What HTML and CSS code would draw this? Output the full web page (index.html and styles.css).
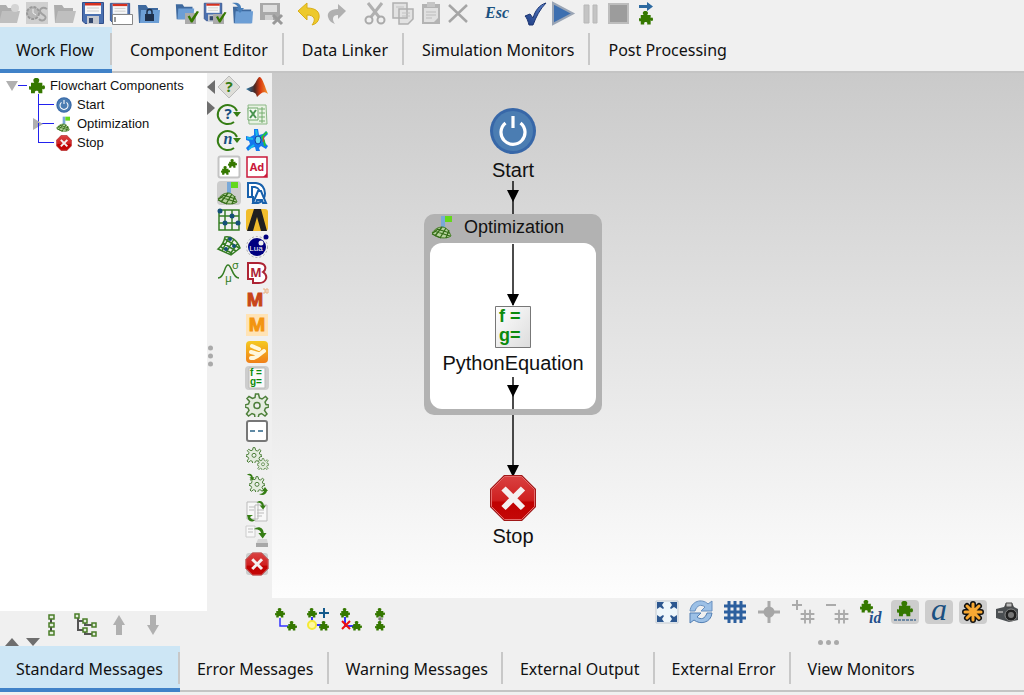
FILE: index.html
```html
<!DOCTYPE html>
<html lang="en">
<head>
  <meta charset="UTF-8">
  <meta name="viewport" content="width=device-width, initial-scale=1.0">
  <title>Work Flow</title>
  <link rel="stylesheet" href="styles.css">
</head>
<body>
  <!-- shared icons -->
  <svg class="defs" aria-hidden="true">
    <defs>
      <linearGradient id="gRed" x1="0" y1="0" x2="0" y2="1"><stop offset="0" stop-color="#d94040"/><stop offset=".55" stop-color="#cf2020"/><stop offset=".6" stop-color="#c00000"/><stop offset="1" stop-color="#c40808"/></linearGradient>
      <linearGradient id="gCheck" x1="0" y1="1" x2="1" y2="0"><stop offset="0" stop-color="#1c3a80"/><stop offset="1" stop-color="#5b83cc"/></linearGradient>
      <linearGradient id="gOrange" x1="0" y1="0" x2="0" y2="1"><stop offset="0" stop-color="#f5c922"/><stop offset="1" stop-color="#f07f18"/></linearGradient>
      <linearGradient id="gFlame" x1="0" y1="0" x2="1" y2="0"><stop offset="0" stop-color="#2d7fb0"/><stop offset=".4" stop-color="#4a2620"/><stop offset=".65" stop-color="#d83a10"/><stop offset="1" stop-color="#f59a30"/></linearGradient>
      <linearGradient id="gPaper" x1="0" y1="0" x2="1" y2="1"><stop offset="0" stop-color="#ffffff"/><stop offset="1" stop-color="#dcdcdc"/></linearGradient>
    </defs>
    <symbol id="puzzle" viewBox="0 0 24 24">
      <path fill="#357800" d="M8 7C5 3 7 0 11 0S17 3 14 7H20V12C22 10 24 11 24 14S22 18 20 16V23H14C15 19.500 13 19 11.500 19S8 19.500 9 23H3V17C1 19 0 17 0 14.500S1 11 3 13V7Z"/>
    </symbol>
    <symbol id="power" viewBox="0 0 48 48">
      <circle cx="24" cy="24" r="23" fill="#3767a8"/><circle cx="24" cy="24" r="20" fill="#4b7db2"/>
      <path d="M16.500 16a12 12 0 1 0 15 0M24 9V21" fill="none" stroke="#fff" stroke-width="3.200"/>
    </symbol>
    <symbol id="stop" viewBox="0 0 48 48">
      <path d="M15 1H33L47 15V33L33 47H15L1 33V15Z" fill="#a01818"/>
      <path d="M15.500 2.500H32.500L45.500 15.500V32.500L32.500 45.500H15.500L2.500 32.500V15.500Z" fill="url(#gRed)" stroke="#e46a6a"/>
      <path d="M14.500 14.500L34 34M34 14.500L14.500 34" stroke="#f4f0f0" stroke-width="6" fill="none"/>
    </symbol>
    <symbol id="hill" viewBox="0 0 24 24">
      <path d="M10 1h4v13h-4z" fill="#7aa9d8"/><path d="M14 1h7v6h-7z" fill="#64d81c"/>
      <path d="M1 18C4 14 7 12 12 12C16 13 18 16 20 21C16 24 6 24 1 18Z" fill="#b5d29c" stroke="#3f7a1f"/>
      <path d="M3 16l16 5M6 14l13 4M1 19l9 4M4 21L11 12M9 23l6-10M15 23l3-8M2 18l5-4" stroke="#356d18" stroke-width="1.300" fill="none"/>
    </symbol>
    <symbol id="floppy" viewBox="0 0 24 24">
      <path d="M1.500 1.500h21v21H4L1.500 20Z" fill="#4a70b0" stroke="#33508c"/>
      <path d="M4 2h16v11H4z" fill="#f7f7f7"/><path d="M4 2h16v2.500H4z" fill="#d6301f"/>
      <path d="M6 7h12M6 10h12" stroke="#ccc"/>
      <path d="M6 15h12v8H6z" fill="#c4c8cf"/><path d="M8 17h4v5H8z" fill="#34486d"/>
    </symbol>
    <symbol id="folder" viewBox="0 0 24 24">
      <path d="M1 4h8l2 3h10v15H2Z" fill="#3e699e"/><path d="M4 9h19l-1 13H3Z" fill="#6c9ed5"/>
    </symbol>
    <symbol id="folder-gray" viewBox="0 0 24 24">
      <path d="M1 4h8l2 3h9v15H2Z" fill="#adadad"/><path d="M5 10h18l-3 12H2Z" fill="#bfbfbf"/>
    </symbol>
    <symbol id="tick" viewBox="0 0 24 24">
      <path d="M3 12l4-2 3 6L20 2l4 1L12 23H9Z" fill="#357800"/>
    </symbol>
    <symbol id="gear" viewBox="0 0 24 24">
      <path d="M10.500 1h3l1 4 2.500 1 3.500-2.500 2 2-2.500 3.500 1 2.500 3 .500v2l-3.500 1-1 2.500 2.500 3.500-2 2-3.500-2.500-2.500 1-1 3.500h-3l-.500-3.500-2.500-1-3.500 2.500-2-2 2.500-3.500-1-2.500-3-1v-2l3.500-1 1-2.500-2.500-3 2-2 3.500 2 2.500-1Z" fill="#e4ecdf" stroke="#4d7f3a" stroke-width="1.500"/>
      <circle cx="12" cy="12.500" r="3" fill="#f0f0f0" stroke="#4d7f3a" stroke-width="1.500"/>
    </symbol>
    <symbol id="bend" viewBox="0 0 24 24">
      <path d="M1 6C8 -1 18 2 19 13h5l-7 10-8-10h5C13 8 8 5 1 6Z" fill="#357d14"/>
    </symbol>
    <symbol id="hash" viewBox="0 0 24 24">
      <path d="M8 1v22M16 1v22M1 8h22M1 16h22" fill="none" stroke="currentColor" stroke-width="3"/>
    </symbol>
  </svg>

  <header class="toolbar">
    <div class="tool-group">
      <button class="tool" aria-label="New"><svg viewBox="0 0 24 24"><use href="#folder-gray"/><circle cx="18" cy="7" r="4" fill="#d4d4d4"/></svg></button>
      <button class="tool" aria-label="Recent"><svg viewBox="0 0 24 24"><path d="M1 1h22v22H1z" fill="#cfcfcf"/><circle cx="8" cy="12" r="6" fill="#b8b8b8" stroke="#999" stroke-width="2" stroke-dasharray="3 1"/><path d="M8 8v4l3 2" fill="none" stroke="#eee"/><path d="M22 8c-5-3-9 1-6 4s6 3 4 6-5 1-6 0" fill="none" stroke="#a0a0a0" stroke-width="2"/></svg></button>
      <button class="tool" aria-label="Open"><svg viewBox="0 0 24 24"><use href="#folder-gray"/></svg></button>
      <button class="tool" aria-label="Save"><svg viewBox="0 0 24 24"><use href="#floppy"/></svg></button>
      <button class="tool" aria-label="Save as"><svg viewBox="0 0 24 24"><use href="#floppy" width="22" height="24"/><path d="M3.500 13.500h20v10h-20z" fill="#fff" stroke="#888"/><path d="M6 16v5" stroke="#333"/></svg></button>
      <button class="tool" aria-label="Lock project"><svg viewBox="0 0 24 24"><use href="#folder"/><path d="M8 13h9v7H8z" fill="#1d2f4b"/><path d="M10 13v-2a2.500 2.500 0 0 1 5 0v2" fill="none" stroke="#1d2f4b" stroke-width="1.500"/></svg></button>
    </div>
    <div class="tool-group">
      <button class="tool" aria-label="Check folder"><svg viewBox="0 0 24 24"><use href="#folder" width="20" height="20"/><path d="M10 12h11v11H10z" fill="#ababab"/><use href="#tick" x="11" y="9" width="13" height="13"/></svg></button>
      <button class="tool" aria-label="Check save"><svg viewBox="0 0 24 24"><use href="#floppy" width="20" height="22"/><path d="M10 13h11v10H10z" fill="#ababab"/><use href="#tick" x="11" y="10" width="13" height="12"/></svg></button>
      <button class="tool" aria-label="Import"><svg viewBox="0 0 24 24"><use href="#folder" x="1" y="2" width="22" height="22"/><path d="M1 2C7 1 10 3 10 7h3l-4 5-4-5h2C7 5 5 3 1 2Z" fill="#477eb9"/></svg></button>
      <button class="tool" aria-label="Save run"><svg viewBox="0 0 24 24"><path d="M1 2h20v17H1z" fill="#a8a8a8"/><path d="M4 4h14v7H4z" fill="#dedede"/><path d="M6 14h8v5H6z" fill="#d0d0d0"/><path d="M14 14l9 9M23 14l-9 9" stroke="#999" stroke-width="3"/></svg></button>
    </div>
    <div class="tool-group">
      <button class="tool" aria-label="Undo"><svg viewBox="0 0 24 24"><path d="M1 10L10 2V7C19 7 23 11 22 17C21 21 19 23 15 24C19 19 18 14 10 14V19Z" fill="#edc92c" stroke="#d9ae18"/></svg></button>
      <button class="tool" aria-label="Redo"><svg viewBox="0 0 24 24"><path d="M21 10L13 3V8C5 8 2 12 3 16C4 20 7 22 10 23C7 19 7 14 13 14V18Z" fill="#b0b0b0"/></svg></button>
    </div>
    <div class="tool-group">
      <button class="tool" aria-label="Cut"><svg viewBox="0 0 24 24"><path d="M5 2l11 14M19 2L8 16" stroke="#b0b0b0" stroke-width="3"/><circle cx="6" cy="19" r="3.500" fill="none" stroke="#aaa" stroke-width="2"/><circle cx="18" cy="19" r="3.500" fill="none" stroke="#aaa" stroke-width="2"/></svg></button>
      <button class="tool" aria-label="Copy"><svg viewBox="0 0 24 24"><path d="M2 2h14v15H2zM8 8h14v10l-5 5H8z" fill="#e2e2e2" stroke="#b0b0b0" stroke-width="1.500"/><path d="M5 6h8M11 12h8M11 15h8" stroke="#c2c2c2"/></svg></button>
      <button class="tool" aria-label="Paste"><svg viewBox="0 0 24 24"><path d="M3 3h18v20H3z" fill="#b3b3b3"/><path d="M5 7h14v10l-4 4H5z" fill="#e0e0e0"/><path d="M8 1h8v5H8z" fill="#c5c5c5"/><path d="M7 11h10M7 14h10M7 17h6" stroke="#bcbcbc"/></svg></button>
      <button class="tool" aria-label="Delete"><svg viewBox="0 0 24 24"><path d="M2 4l18 17M20 4L2 21" stroke="#a5a5a5" stroke-width="2.500"/></svg></button>
    </div>
    <div class="tool-group">
      <button class="tool esc">Esc</button>
    </div>
    <div class="tool-group">
      <button class="tool" aria-label="Validate"><svg viewBox="0 0 24 24"><path d="M2 15l5-2 3 4C12 10 16 4 23 2C17 8 13 16 10 24H6C5 20 4 17 2 15Z" fill="url(#gCheck)" stroke="#1c3571"/></svg></button>
      <button class="tool" aria-label="Run"><svg viewBox="0 0 24 24"><path d="M2 2L22 12.500L2 23Z" fill="#3d6fb0" stroke="#9aa5b5" stroke-width="2"/></svg></button>
      <button class="tool" aria-label="Pause"><svg viewBox="0 0 24 24"><path d="M5 4h5v18H5zM14 4h4v18h-4z" fill="#c4c4c4" stroke="#b8b8b8"/></svg></button>
      <button class="tool" aria-label="Stop"><svg viewBox="0 0 24 24"><path d="M2 3h19v19H2z" fill="#9c9c9c" stroke="#bdbdbd" stroke-width="2"/></svg></button>
      <button class="tool" aria-label="Run component"><svg viewBox="0 0 24 24"><path d="M4 4h8V1l6 4.500-6 4.500V7H4Z" fill="#2c69a0"/><use href="#puzzle" x="4" y="10" width="14" height="14"/></svg></button>
    </div>
  </header>

  <nav class="tabs">
    <button class="tab active">Work Flow</button>
    <button class="tab">Component Editor</button>
    <button class="tab">Data Linker</button>
    <button class="tab">Simulation Monitors</button>
    <button class="tab">Post Processing</button>
  </nav>

  <main class="workspace">
    <aside class="sidebar">
      <div class="tree">
        <div class="tree-row root">
          <button class="toggle" aria-label="Collapse"><svg viewBox="0 0 12 12"><path d="M0 1h12L6 11Z"/></svg></button>
          <span class="dash"></span>
          <svg class="tree-icon"><use href="#puzzle"/></svg>
          <span>Flowchart Components</span>
        </div>
        <ul>
          <li class="tree-row"><svg class="tree-icon"><use href="#power"/></svg><span>Start</span></li>
          <li class="tree-row"><button class="toggle branch" aria-label="Expand"><svg viewBox="0 0 12 12"><path d="M1 0v12L11 6Z"/></svg></button><svg class="tree-icon"><use href="#hill"/></svg><span>Optimization</span></li>
          <li class="tree-row"><svg class="tree-icon"><use href="#stop"/></svg><span>Stop</span></li>
        </ul>
      </div>
      <div class="tree-tools">
        <button class="tool" aria-label="Flat list"><svg viewBox="0 0 24 24"><path d="M12 2v20" stroke="#444" stroke-width="2"/><path d="M10 2h5v4h-5zM10 10h5v4h-5zM10 18h5v4h-5z" fill="#e5eedf" stroke="#4a7d28" stroke-width="1.500"/></svg></button>
        <button class="tool" aria-label="Tree list"><svg viewBox="0 0 24 24"><path d="M5 3v14h8M5 8h8M12 8v4h8M12 17v4h8" fill="none" stroke="#555" stroke-width="2"/><path d="M2 1h4v4H2zM10 6h4v4h-4zM10 15h4v4h-4zM19 10h4v4h-4zM19 19h4v4h-4z" fill="#e5eedf" stroke="#4a7d28" stroke-width="1.500"/></svg></button>
        <button class="tool" aria-label="Move up"><svg viewBox="0 0 24 24"><path d="M12 2l6 10h-3v10H9V12H6Z" fill="#b0b0b0"/></svg></button>
        <button class="tool" aria-label="Move down"><svg viewBox="0 0 24 24"><path d="M12 22l6-10h-3V2H9v10H6Z" fill="#b0b0b0"/></svg></button>
      </div>
    </aside>

    <div class="sash">
      <button class="sash-arrow" aria-label="Hide tree"><svg viewBox="0 0 8 14"><path d="M8 0v14L0 7Z"/></svg></button>
      <button class="sash-arrow" aria-label="Show tree"><svg viewBox="0 0 8 14"><path d="M0 0v14L8 7Z"/></svg></button>
      <span class="dots"><i></i><i></i><i></i></span>
    </div>

    <div class="palette">
      <div class="palette-col">
        <button class="tool" aria-label="Condition"><svg viewBox="0 0 24 24"><path d="M12 1L23 12L12 23L1 12Z" fill="#deded8" stroke="#bbb"/><text x="12" y="17" class="q green">?</text></svg></button>
        <button class="tool" aria-label="Loop condition"><svg viewBox="0 0 24 24"><path d="M17 20A10 9.500 0 1 1 20 9" fill="none" stroke="#357d14" stroke-width="2"/><path d="M16 10h8l-4 5Z" fill="#357d14"/><text x="11" y="17" class="q blue">?</text></svg></button>
        <button class="tool" aria-label="Loop count"><svg viewBox="0 0 24 24"><path d="M17 20A10 9.500 0 1 1 20 9" fill="none" stroke="#357d14" stroke-width="2"/><path d="M16 10h8l-4 5Z" fill="#357d14"/><text x="11" y="16" class="n blue">n</text></svg></button>
        <button class="tool" aria-label="Group"><svg viewBox="0 0 24 24"><rect x="1.500" y="1.500" width="21" height="21" rx="2" fill="#fff" stroke="#c4c4c4" stroke-width="2"/><use href="#puzzle" x="4" y="11" width="9" height="9"/><use href="#puzzle" x="11" y="4" width="9" height="9"/></svg></button>
        <button class="tool pressed" aria-label="Optimization"><svg viewBox="0 0 24 24"><use href="#hill"/></svg></button>
        <button class="tool" aria-label="Parameter study"><svg viewBox="0 0 24 24"><path d="M2 2h20v20H2zM8 2v20M15 2v20M2 8h20M2 15h20" fill="none" stroke="#357d24" stroke-width="1.500"/><g fill="#155078"><circle cx="3" cy="3" r="2.500"/><circle cx="15" cy="8" r="2.500"/><circle cx="8" cy="15" r="2.500"/><circle cx="21" cy="15" r="2.500"/></g></svg></button>
        <button class="tool" aria-label="Response surface"><svg viewBox="0 0 24 24"><path d="M8 3C14 2 20 6 23 14L14 21L1 15C5 12 7 8 8 3ZM6 9l13 8M8 5l14 9M4 13l12 7M12 3L5 17M17 5L9 19M21 9l-8 11" fill="none" stroke="#357d24" stroke-width="1.500"/><circle cx="13" cy="5" r="2" fill="#155078"/><circle cx="9" cy="15" r="2" fill="#155078"/><circle cx="17" cy="12" r="2" fill="#155078"/></svg></button>
        <button class="tool" aria-label="Robustness"><svg viewBox="0 0 24 24"><path d="M1 17C8 17 7 4 11 4S15 17 22 17" fill="none" stroke="#357d24" stroke-width="1.500"/><text x="15" y="8" class="sym">σ</text><text x="8" y="21" class="sym">µ</text></svg></button>
      </div>
      <div class="palette-col">
        <button class="tool" aria-label="Matlab"><svg viewBox="0 0 24 24"><path d="M1 14L8 11C11 8 13 1 15 2C18 4 20 12 23 19C19 16 17 17 12 22C11 18 9 17 6 17Z" fill="url(#gFlame)"/></svg></button>
        <button class="tool" aria-label="Excel"><svg viewBox="0 0 24 24"><path d="M3 3h18l1 19H4Z" fill="#e8f2e3" stroke="#8cb886"/><path d="M14 7h6M14 11h6M14 15h6M14 19h6M17 5v16" stroke="#74ad6e"/><path d="M3 6h10v12H3z" fill="#f4faf2" stroke="#73a96c"/><path d="M5 8l6 8M11 8l-6 8" stroke="#4a9450" stroke-width="2"/></svg></button>
        <button class="tool" aria-label="Simulation"><svg viewBox="0 0 24 24"><path d="M9 1h4l1 6 4-1 3-3 2 3-4 4 1 5 3 3-2 3-5-3-2 2 1 3h-4l-1-4-4 1-3 3-2-3 4-4-1-3-3-1V8l4 1 4-2Z" fill="#1478ee"/><path d="M11 2l1 6M2 10l6 1M4 21l5-4" fill="none" stroke="#17bde6" stroke-width="2"/><ellipse cx="13" cy="12" rx="3" ry="4" fill="#68dbf4" stroke="#103fa0"/><path d="M22 4l-5 5 2 4 1 5" fill="none" stroke="#22c33f" stroke-width="2"/><path d="M19 8l-1 6" stroke="#e33"/></svg></button>
        <button class="tool" aria-label="Adams"><svg viewBox="0 0 24 24"><path d="M2 2h20v20H2z" fill="#fff" stroke="#c9183a" stroke-width="1.500"/><path d="M22 18v4h-4Z" fill="#c9183a"/><text x="12" y="16" class="ad">Ad</text></svg></button>
        <button class="tool" aria-label="Design analysis"><svg viewBox="0 0 24 24"><path d="M3 2h8c12 1 12 20 0 20H8v-6H3Z" fill="#fff" stroke="#1760ab" stroke-width="2"/><path d="M7 16V6h3c4 1 6 5 5 10" fill="none" stroke="#1760ab" stroke-width="2"/><path d="M8 22l5-12h3l5 12h-3l-1-3h-5l-1 3Z" fill="#fff" stroke="#1760ab" stroke-width="2"/></svg></button>
        <button class="tool" aria-label="Ansys"><svg viewBox="0 0 24 24"><rect x="1" y="1" width="22" height="22" rx="3" fill="#f1bd2c"/><path d="M9 1h7l6 22h-6L12 9 8 23H2Z" fill="#202020"/></svg></button>
        <button class="tool" aria-label="Lua"><svg viewBox="0 0 24 24"><circle cx="12" cy="13" r="10.500" fill="none" stroke="#aaa" stroke-dasharray="2 2"/><circle cx="12" cy="13" r="9" fill="#000080"/><circle cx="16" cy="9" r="2.500" fill="#f0f0f0"/><circle cx="21" cy="3" r="2.500" fill="#000080"/><text x="11" y="17" class="lua">Lua</text></svg></button>
        <button class="tool" aria-label="Madymo"><svg viewBox="0 0 24 24"><path d="M3 2h10c8 0 9 6 5 9c6 4 3 11-4 11H8v-4H3Z" fill="#fff" stroke="#ad2434" stroke-width="2"/><text x="11" y="16" class="m red">M</text></svg></button>
        <button class="tool" aria-label="Marc 3D"><svg viewBox="0 0 24 24"><text x="10" y="19" class="m big rust">M</text><path d="M18 2h2v4h-2M21 2h2v4h-2z" fill="none" stroke="#eab080"/></svg></button>
        <button class="tool" aria-label="Marc"><svg viewBox="0 0 24 24"><path d="M1 1h22v22H1z" fill="#ffe3b5"/><text x="12" y="18" class="m big orange">M</text></svg></button>
        <button class="tool" aria-label="Python"><svg viewBox="0 0 24 24"><rect x="1" y="1" width="22" height="22" rx="4" fill="url(#gOrange)"/><path d="M7 6l7 3M6 12l7 2M6 18c6 1 8-4 13-7" stroke="#fff7dc" stroke-width="4" fill="none" stroke-linecap="round"/></svg></button>
        <button class="tool pressed" aria-label="Equation"><svg viewBox="0 0 24 24"><path d="M4 2h16v20H4z" fill="#fafafa" stroke="#bbb"/><text x="5" y="10" class="eq small">f =</text><text x="5" y="19" class="eq small">g=</text></svg></button>
        <button class="tool" aria-label="Command"><svg viewBox="0 0 24 24"><use href="#gear"/></svg></button>
        <button class="tool" aria-label="Blank"><svg viewBox="0 0 24 24"><rect x="2" y="2" width="20" height="20" rx="2" fill="#fff" stroke="#777" stroke-width="2"/><path d="M5 12h5M13 12h5" stroke="#2d6488" stroke-width="1.500"/></svg></button>
        <button class="tool" aria-label="Batch"><svg viewBox="0 0 24 24"><use href="#gear" x="1" y="1" width="16" height="16"/><use href="#gear" x="12" y="12" width="12" height="12"/></svg></button>
        <button class="tool" aria-label="Remote command"><svg viewBox="0 0 24 24"><use href="#gear" x="4" y="4" width="16" height="16"/><use href="#bend" x="1" y="1" width="9" height="8"/><path d="M20 15l3 4h-1c-1 4-5 5-8 3 3 0 4-1 5-3h-2Z" fill="#357d14"/></svg></button>
        <button class="tool" aria-label="Copy files"><svg viewBox="0 0 24 24"><path d="M2 3h11v17H2zM10 6h12v16H10z" fill="#f8f8f8" stroke="#bbb"/><path d="M4 8h6M4 11h5M12 11h7M12 14h7M12 17h5" stroke="#bbb"/><use href="#bend" x="11" y="1" width="10" height="10"/><path d="M2 16h6l-3 2c1 2 3 3 5 3-3 3-6 1-7-1Z" fill="#357d14"/></svg></button>
        <button class="tool" aria-label="Save output"><svg viewBox="0 0 24 24"><path d="M1 1h9v11H1z" fill="#f8f8f8" stroke="#ccc"/><path d="M3 4h5M3 7h5" stroke="#bbb"/><use href="#bend" x="8" y="1" width="14" height="13"/><path d="M13 14h9l1 5H11Z" fill="#d4d4d4"/><path d="M11 18h12v4H11z" fill="#a7a7a7"/></svg></button>
        <button class="tool" aria-label="Stop"><svg viewBox="0 0 24 24"><rect x="1" y="1" width="22" height="22" rx="3" fill="#ccc"/><use href="#stop" width="24" height="24"/></svg></button>
      </div>
    </div>

    <section class="stage">
      <div class="canvas">
        <div class="group">
          <div class="group-title"><svg viewBox="0 0 24 24"><use href="#hill"/></svg><span>Optimization</span></div>
          <div class="group-body"></div>
        </div>
        <svg class="links" width="340" height="420">
          <path d="M241 108V141M241 171V232M241 304V336M241 342V402" stroke="#111" stroke-width="1.500"/>
          <path d="M235 117h12l-6 12ZM235 221h12l-6 12ZM235 312h12l-6 12ZM235 392h12l-6 12Z"/>
        </svg>
        <div class="node node-start"><svg width="48" height="48"><use href="#power"/></svg><span>Start</span></div>
        <div class="node node-equation">
          <svg width="38" height="42" viewBox="0 0 38 42"><path d="M1.500 .500h35v41h-35z" fill="url(#gPaper)" stroke="#777"/><text x="5" y="16" class="eq">f =</text><text x="5" y="35" class="eq">g=</text></svg>
          <span>PythonEquation</span>
        </div>
        <div class="node node-stop"><svg width="48" height="48"><use href="#stop"/></svg><span>Stop</span></div>
      </div>

      <div class="stage-tools">
        <div class="link-tools">
          <button class="tool" aria-label="Link"><svg viewBox="0 0 24 24"><use href="#puzzle" x="1" y="1" width="10" height="10"/><path d="M6 11v8h8" fill="none" stroke="#33f" stroke-width="1.500"/><use href="#puzzle" x="13" y="14" width="10" height="10"/></svg></button>
          <button class="tool" aria-label="Add link"><svg viewBox="0 0 24 24"><path d="M6 10v6M10 18h5" stroke="#33f" stroke-width="2"/><circle cx="6" cy="18" r="4" fill="#fff8a0" stroke="#f5e936" stroke-width="2"/><use href="#puzzle" x="1" y="1" width="10" height="10"/><use href="#puzzle" x="13" y="14" width="10" height="10"/><path d="M18 1v10M13 6h10" stroke="#155a8c" stroke-width="2"/></svg></button>
          <button class="tool" aria-label="Remove link"><svg viewBox="0 0 24 24"><path d="M7 10v9h9" stroke="#33f" fill="none" stroke-width="2"/><use href="#puzzle" x="2" y="1" width="10" height="10"/><use href="#puzzle" x="14" y="14" width="10" height="10"/><path d="M4 14l8 8M12 14l-8 8" stroke="#f01010" stroke-width="2"/></svg></button>
          <button class="tool" aria-label="Insert"><svg viewBox="0 0 24 24"><use href="#puzzle" x="5" y="1" width="10" height="10"/><path d="M10 9v6M8 12h5" stroke="#555"/><use href="#puzzle" x="5" y="14" width="10" height="10"/></svg></button>
        </div>
        <div class="view-tools">
          <button class="tool" aria-label="Fit"><svg viewBox="0 0 24 24"><path d="M1 1h22v22H1z" fill="#eef6fb" stroke="#c3c9d0"/><path d="M2 2h7L7 5l2 3-1 1-3-2-3 2ZM22 2h-7l2 3-2 3 1 1 3-2 3 2ZM2 22h7l-2-3 2-3-1-1-3 2-3-2ZM22 22h-7l2-3-2-3 1-1 3 2 3-2Z" fill="#2c5790"/></svg></button>
          <button class="tool" aria-label="Refresh"><svg viewBox="0 0 24 24"><path d="M1 11C2 1 13-2 19 4L23 1V11H12L16 7C12 4 8 5 6 11Z" fill="#9cc0e6" stroke="#6890c0"/><path d="M23 13C22 23 11 25 5 20L1 23V13H12L8 17C12 20 16 19 18 13Z" fill="#9cc0e6" stroke="#537fb3"/></svg></button>
          <button class="tool" aria-label="Grid"><svg class="blue-grid" viewBox="0 0 24 24"><path d="M6 1v22M12 1v22M18 1v22M1 6h22M1 12h22M1 18h22" stroke="currentColor" stroke-width="3"/></svg></button>
          <button class="tool" aria-label="Center"><svg viewBox="0 0 24 24"><path d="M12 1v22M1 12h22" stroke="#aaa" stroke-width="3"/><circle cx="12" cy="12" r="5.500" fill="#a6a6a6"/></svg></button>
          <button class="tool" aria-label="Finer grid"><svg class="gray-grid" viewBox="0 0 24 24"><path d="M6 0v10M1 5h10" stroke="currentColor" stroke-width="2"/><use href="#hash" x="9" y="9" width="15" height="15"/></svg></button>
          <button class="tool" aria-label="Coarser grid"><svg class="gray-grid" viewBox="0 0 24 24"><path d="M1 5h10" stroke="currentColor" stroke-width="2"/><use href="#hash" x="9" y="9" width="15" height="15"/></svg></button>
          <button class="tool" aria-label="Show id"><svg viewBox="0 0 24 24"><use href="#puzzle" x="1" y="0" width="13" height="13"/><text x="10" y="23" class="id">id</text></svg></button>
          <button class="tool pressed" aria-label="Show names"><svg viewBox="0 0 24 24"><use href="#puzzle" x="4" y="1" width="16" height="16"/><path d="M1 20h22" stroke="#4e7195" stroke-width="1.500" stroke-dasharray="3 1"/></svg></button>
          <button class="tool pressed" aria-label="Labels"><svg viewBox="0 0 24 24"><text x="12" y="20" class="script-a">a</text></svg></button>
          <button class="tool pressed" aria-label="Highlight"><svg viewBox="0 0 24 24"><path d="M12 4v16M4 12h16M6 6l12 12M18 6L6 18" stroke="#111" stroke-width="6" stroke-linecap="round"/><path d="M12 4v16M4 12h16M6 6l12 12M18 6L6 18" stroke="#f7a833" stroke-width="3" stroke-linecap="round"/></svg></button>
          <button class="tool" aria-label="Snapshot"><svg viewBox="0 0 24 24"><path d="M1 9l8-2 2-4h6l2 4 4 2v11l-9 2L1 18Z" fill="#4b4f52"/><path d="M11 3h6v4h-6z" fill="#bbb" stroke="#444"/><circle cx="16" cy="15" r="6" fill="#222" stroke="#888"/><circle cx="16" cy="15" r="3" fill="#777"/><path d="M3 11h5v2H3z" fill="#999"/></svg></button>
        </div>
      </div>
    </section>
  </main>

  <div class="sash-bottom">
    <button class="sash-arrow" aria-label="Show messages"><svg viewBox="0 0 14 8"><path d="M0 8h14L7 0Z"/></svg></button>
    <button class="sash-arrow" aria-label="Hide messages"><svg viewBox="0 0 14 8"><path d="M0 0h14L7 8Z"/></svg></button>
    <span class="dots"><i></i><i></i><i></i></span>
  </div>

  <nav class="tabs messages">
    <button class="tab active">Standard Messages</button>
    <button class="tab">Error Messages</button>
    <button class="tab">Warning Messages</button>
    <button class="tab">External Output</button>
    <button class="tab">External Error</button>
    <button class="tab">View Monitors</button>
  </nav>
</body>
</html>
```
FILE: styles.css
```css
* {
  box-sizing: border-box;
}
body {
  margin: 0;
  height: 100vh;
  display: flex;
  flex-direction: column;
  background-color: #f0f0f0;
  color: #111;
  font-family: "Liberation Sans", Arial, sans-serif;
  font-size: 13px;
  overflow: hidden;
}
button {
  padding: 0;
  border: none;
  background: none;
  color: inherit;
  cursor: pointer;
}
svg {
  display: block;
  flex: none;
}
.defs {
  position: absolute;
  width: 0;
  height: 0;
}

/* toolbar */
.toolbar {
  display: flex;
  flex: none;
  gap: 14px;
  height: 27px;
  padding-top: 1px;
  margin-left: -3px;
}
.tool-group {
  display: flex;
  gap: 4px;
}
.tool {
  width: 24px;
  height: 24px;
  display: flex;
  align-items: center;
  justify-content: center;
  flex: none;
  border-radius: 4px;
}
.tool svg {
  width: 24px;
  height: 24px;
}
.pressed {
  background-color: #cdcdcd;
}
.esc {
  font: italic bold 16px "Liberation Serif", serif;
  color: #1c5280;
}

/* tabs */
.tabs {
  display: flex;
  flex: none;
  height: 46px;
  border-bottom: 2px solid #c4c4c4;
}
.tab {
  position: relative;
  height: 46px;
  padding: 0 16px 0 18px;
  font: 16px "Noto Sans", "Open Sans", sans-serif;
}
.tab::after {
  content: "";
  position: absolute;
  top: 6px;
  right: 0;
  width: 2px;
  height: 32px;
  background-color: #c8c8c8;
}
.tab:last-child::after {
  display: none;
}
.tab.active {
  padding: 4px 18px 0 16px;
  background-color: #cde6f5;
  border-bottom: 4px solid #4082c8;
}
.messages {
  margin-bottom: 3px;
}
.messages .tab {
  padding: 0 15px 0 17px;
}
.messages .tab.active {
  padding: 4px 17px 0 16px;
}

/* main area */
.workspace {
  display: flex;
  flex: 1;
  min-height: 0;
}
.sidebar {
  display: flex;
  flex-direction: column;
  width: 207px;
  flex: none;
}
.tree {
  flex: 1;
  padding-top: 3px;
  background-color: #fff;
}
.tree ul {
  list-style: none;
  margin: 0 0 0 38px;
  padding: 0;
}
.tree-row {
  position: relative;
  display: flex;
  align-items: center;
  height: 19px;
  gap: 5px;
}
.tree-icon {
  width: 16px;
  height: 16px;
}
.root {
  padding-left: 6px;
  gap: 0;
  z-index: 1;
}
.root .tree-icon {
  margin-right: 5px;
}
.toggle svg {
  width: 12px;
  height: 12px;
  fill: #b0b0b0;
}
.dash {
  width: 9px;
  margin-right: 2px;
  border-top: 1px solid #22e;
}
.tree li {
  padding-left: 18px;
}
.tree li::before {
  content: "";
  position: absolute;
  left: 0;
  bottom: 9px;
  width: 15px;
  height: 19px;
  border-left: 1px solid #22e;
  border-bottom: 1px solid #22e;
}
.tree li:first-child::before {
  height: 10px;
}
.toggle.branch {
  position: absolute;
  left: -6px;
}
.tree-tools {
  display: flex;
  flex: none;
  gap: 10px;
  height: 27px;
  padding: 2px 0 0 39px;
}

/* splitters */
.sash {
  position: relative;
  display: flex;
  flex-direction: column;
  gap: 7px;
  width: 8px;
  flex: none;
  padding-top: 7px;
}
.sash-arrow svg {
  width: 8px;
  height: 14px;
  fill: #6e6e6e;
}
.dots {
  display: flex;
  gap: 3px;
}
.dots i {
  width: 5px;
  height: 5px;
  border-radius: 50%;
  background-color: #aaa;
}
.sash .dots {
  position: absolute;
  top: 50%;
  left: 1px;
  flex-direction: column;
  transform: translateY(-50%);
}
.sash-bottom {
  display: flex;
  flex: none;
  align-items: center;
  gap: 7px;
  height: 8px;
  padding-left: 5px;
}
.sash-bottom .sash-arrow svg {
  width: 14px;
  height: 8px;
}
.sash-bottom .dots {
  margin-left: auto;
  margin-right: 185px;
}

/* component palette */
.palette {
  display: flex;
  flex: none;
  gap: 4px;
  width: 57px;
  padding: 1px 0 61px 2px;
}
.palette-col {
  display: grid;
  grid-template-rows: repeat(19, minmax(24px, 1fr));
  align-items: center;
}

/* flowchart */
.stage {
  display: flex;
  flex-direction: column;
  flex: 1;
  min-width: 0;
}
.canvas {
  position: relative;
  flex: 1;
  overflow: hidden;
  background-image: linear-gradient(#cacaca, #fdfdfd);
}
.group {
  position: absolute;
  top: 141px;
  left: 152px;
  width: 178px;
  height: 201px;
  padding: 0 6px 6px;
  display: flex;
  flex-direction: column;
  border-radius: 10px;
  background-color: #b2b2b2;
}
.group-title {
  display: flex;
  align-items: center;
  gap: 9px;
  height: 29px;
  padding: 0 0 3px 1px;
  font-size: 18px;
  line-height: 24px;
}
.group-title svg {
  width: 24px;
  height: 24px;
}
.group-body {
  flex: 1;
  border-radius: 12px;
  background-color: #fff;
}
.links {
  position: absolute;
  top: 0;
  left: 0;
}
.node {
  position: absolute;
  left: 161px;
  width: 160px;
  display: flex;
  flex-direction: column;
  align-items: center;
  gap: 2px;
  font-size: 20px;
  line-height: 24px;
}
.node-start {
  top: 34px;
  gap: 3px;
}
.node-equation {
  top: 233px;
  gap: 3px;
}
.node-stop {
  top: 401px;
}
.stage-tools {
  display: flex;
  flex: none;
  justify-content: space-between;
  height: 40px;
  padding: 2px 3px 0 2px;
}
.link-tools {
  display: flex;
  gap: 8px;
  padding-top: 7px;
}
.view-tools {
  display: flex;
  gap: 6px;
}
.view-tools .tool {
  width: 28px;
}

/* lettering inside icons */
.tool svg {
  overflow: visible;
}
.eq {
  font: bold 18px "Liberation Sans", sans-serif;
  fill: #0b8a0b;
}
.eq.small {
  font-size: 10px;
}
.q, .n, .ad, .lua, .m, .script-a {
  text-anchor: middle;
}
.q {
  font: bold 15px "Noto Sans", sans-serif;
}
.n {
  font: italic bold 16px "Liberation Serif", serif;
}
.green {
  fill: #357d14;
}
.blue {
  fill: #174f80;
}
.sym {
  font: 11px "Noto Sans", sans-serif;
  fill: #357d24;
}
.ad {
  font: bold 11px "Noto Sans", sans-serif;
  fill: #c9183a;
}
.lua {
  font: 8px "Liberation Sans", sans-serif;
  fill: #fff;
}
.m {
  font: bold 12px "Noto Sans", sans-serif;
}
.m.big {
  font-size: 18px;
  stroke-width: 1px;
}
.red {
  fill: #ad2434;
}
.rust {
  fill: #c8461a;
  stroke: #c8461a;
}
.orange {
  fill: #f29410;
  stroke: #f29410;
}
.id {
  font: italic bold 16px "Liberation Serif", serif;
  fill: #234f8c;
}
.script-a {
  font: italic 32px "Liberation Serif", serif;
  fill: #1b5080;
}
.blue-grid {
  color: #2c5f9e;
}
.gray-grid {
  color: #aaa;
}
```
